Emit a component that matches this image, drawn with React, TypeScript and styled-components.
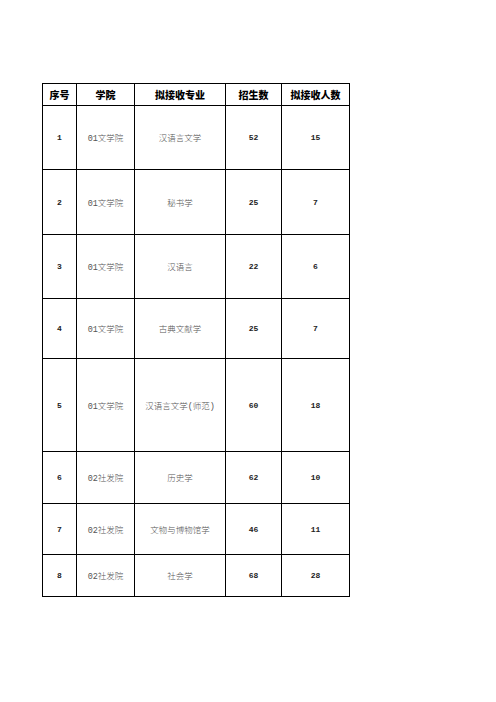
import React from 'react';
import styled, { createGlobalStyle } from 'styled-components';

const GlobalStyle = createGlobalStyle`
	html, body {
		margin: 0;
		padding: 0;
		background: #ffffff;
	}
`;

interface IRow {
	no: string;
	school: string;
	major: string;
	plan: string;
	accept: string;
	height: number;
}

const rows: IRow[] = [
	{ no: '1', school: '01文学院', major: '汉语言文学', plan: '52', accept: '15', height: 64 },
	{ no: '2', school: '01文学院', major: '秘书学', plan: '25', accept: '7', height: 65 },
	{ no: '3', school: '01文学院', major: '汉语言', plan: '22', accept: '6', height: 64 },
	{ no: '4', school: '01文学院', major: '古典文献学', plan: '25', accept: '7', height: 60 },
	{ no: '5', school: '01文学院', major: '汉语言文学(师范)', plan: '60', accept: '18', height: 93 },
	{ no: '6', school: '02社发院', major: '历史学', plan: '62', accept: '10', height: 52 },
	{ no: '7', school: '02社发院', major: '文物与博物馆学', plan: '46', accept: '11', height: 51 },
	{ no: '8', school: '02社发院', major: '社会学', plan: '68', accept: '28', height: 42 },
];

export default function App() {
	return (
		<Page>
			<GlobalStyle />
			<Sheet>
				<colgroup>
					<col style={{ width: 34 }} />
					<col style={{ width: 58 }} />
					<col style={{ width: 91 }} />
					<col style={{ width: 56 }} />
					<col style={{ width: 68 }} />
				</colgroup>
				<thead>
					<Row $h={22}>
						<Head>序号</Head>
						<Head>学院</Head>
						<Head>拟接收专业</Head>
						<Head>招生数</Head>
						<Head>拟接收人数</Head>
					</Row>
				</thead>
				<tbody>
					{rows.map(r => (
						<Row key={r.no} $h={r.height}>
							<Num>{r.no}</Num>
							<Cell>{r.school}</Cell>
							<Cell>{r.major}</Cell>
							<Num>{r.plan}</Num>
							<Num>{r.accept}</Num>
						</Row>
					))}
				</tbody>
			</Sheet>
		</Page>
	);
}

/**
 * Styled Components...
 */
const Page = styled.div`
	width: 496px;
	height: 702px;
	padding: 83px 0 0 42px;
	box-sizing: border-box;
`;
const Sheet = styled.table`
	width: 308px;
	border-collapse: collapse;
	table-layout: fixed;
`;
const Row = styled.tr<{ $h: number }>`
	height: ${p => p.$h}px;
`;
const Head = styled.th`
	border: 1px solid #000;
	padding: 0;
	text-align: center;
	vertical-align: middle;
	font-family: "Noto Sans CJK SC", sans-serif;
	font-size: 10px;
	font-weight: 900;
	color: #000;
`;
const Cell = styled.td`
	border: 1px solid #000;
	padding: 0;
	text-align: center;
	vertical-align: middle;
	font-family: "Liberation Mono", "Noto Sans CJK SC", monospace;
	font-size: 8.5px;
	font-weight: 300;
	color: #555;
	white-space: nowrap;
`;
const Num = styled(Cell)`
	font-size: 8px;
	font-weight: 700;
	color: #222;
`;
